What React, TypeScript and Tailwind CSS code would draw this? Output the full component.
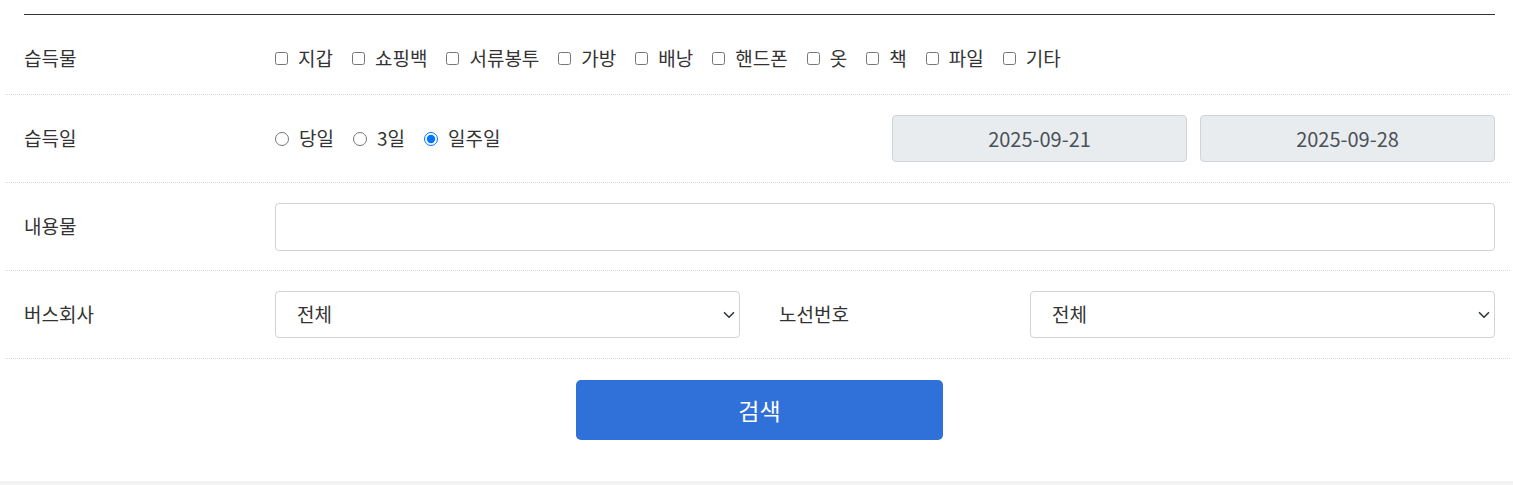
import { useState } from 'react'

const items = ['지갑', '쇼핑백', '서류봉투', '가방', '배낭', '핸드폰', '옷', '책', '파일', '기타']

function Chevron() {
  return (
    <svg className="pointer-events-none absolute right-[5px] top-1/2 -translate-y-1/2" width="12" height="12" viewBox="0 0 16 16" fill="none">
      <path d="M2 5l6 6 6-6" stroke="#343a40" strokeWidth="2.2" strokeLinecap="round" strokeLinejoin="round" />
    </svg>
  )
}

function Select() {
  return (
    <div className="relative">
      <select className="h-[47px] w-full appearance-none rounded-[4px] border border-[#ced4da] bg-white pl-[21px] text-[19px] text-[#333] outline-none">
        <option>전체</option>
      </select>
      <Chevron />
    </div>
  )
}

export default function App() {
  const [period, setPeriod] = useState('week')
  const rowCls = 'ml-[5px] mr-[3px] grid grid-cols-[251px_1fr_290px_1fr] items-center border-b border-dotted border-[#d9d9d9] pl-[19px] pr-[15px]'

  return (
    <div className="min-h-screen bg-white text-[19px] text-[#333]" style={{ fontFamily: '"Noto Sans CJK KR", "Noto Sans", sans-serif' }}>
      <div className="pt-[14px]">
        <div className="ml-[24px] mr-[18px] h-px bg-[#333]" />
      </div>

      {/* 습득물 */}
      <div className={`${rowCls} h-[80px] pt-[7px]`}>
        <div>습득물</div>
        <div className="col-span-3 flex items-center gap-[19px]">
          {items.map(it => (
            <label key={it} className="flex items-center">
              <input type="checkbox" className="m-0 mr-[10px] h-[13px] w-[13px]" />
              <span>{it}</span>
            </label>
          ))}
        </div>
      </div>

      {/* 습득일 */}
      <div className={`${rowCls} h-[88px]`}>
        <div>습득일</div>
        <div className="flex items-center gap-[19px]">
          {[
            ['today', '당일'],
            ['three', '3일'],
            ['week', '일주일'],
          ].map(([k, l]) => (
            <label key={k} className="flex items-center">
              <input
                type="radio"
                name="period"
                checked={period === k}
                onChange={() => setPeriod(k)}
                className="m-0 mr-[10px] h-[14px] w-[14px]"
              />
              <span>{l}</span>
            </label>
          ))}
        </div>
        <div className="col-span-2 grid grid-cols-[295px_295px] justify-end gap-[13px]">
          <div className="flex h-[47px] items-center justify-center rounded-[4px] border border-[#ced4da] bg-[#e9ecef] text-[20px] text-[#495057]">2025-09-21</div>
          <div className="flex h-[47px] items-center justify-center rounded-[4px] border border-[#ced4da] bg-[#e9ecef] text-[20px] text-[#495057]">2025-09-28</div>
        </div>
      </div>

      {/* 내용물 */}
      <div className={`${rowCls} h-[88px]`}>
        <div>내용물</div>
        <div className="col-span-3">
          <input type="text" className="h-[48px] w-full rounded-[4px] border border-[#ced4da] bg-white px-3 outline-none" />
        </div>
      </div>

      {/* 버스회사 / 노선번호 */}
      <div className={`${rowCls} h-[88px]`}>
        <div>버스회사</div>
        <Select />
        <div className="pl-[39px]">노선번호</div>
        <Select />
      </div>

      <div className="flex justify-center pt-[21px] pb-[41px] pl-[6px]">
        <button className="h-[60px] w-[367px] rounded-[5px] bg-[#3070d9] text-[23px] text-white">검색</button>
      </div>

      <div className="h-[10px] bg-[#f3f3f3]" />
    </div>
  )
}
